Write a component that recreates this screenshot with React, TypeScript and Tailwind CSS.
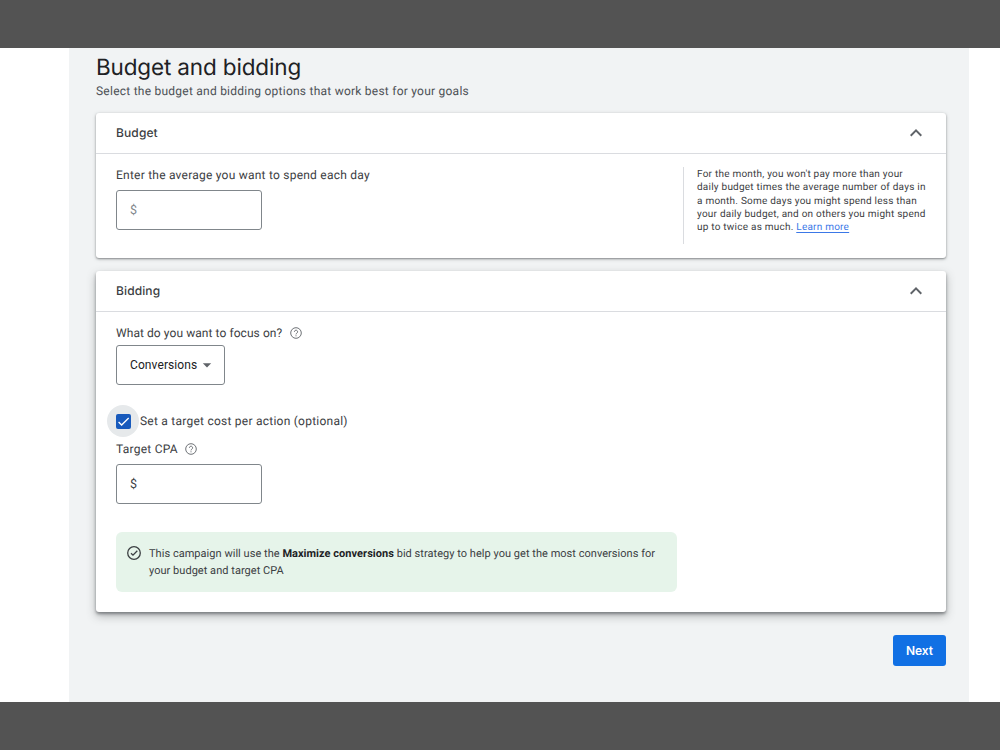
import type { ReactNode } from "react"
import { MdArrowDropDown, MdCheck, MdExpandLess } from "react-icons/md"

interface PanelProps {
    title: string
    className: string
    children: ReactNode
}

function Panel({ title, className, children }: PanelProps) {
    return (
        <section className={`rounded-[3px] bg-white ${className}`}>
            <header className="flex h-[41px] items-center justify-between border-b border-[#dadce0] pl-5 pr-[18px]">
                <h2 className="font-[Inter,sans-serif] text-[12px] font-medium tracking-[0.12px] text-[#3c4043]">{title}</h2>
                <MdExpandLess className="mb-px size-6 text-[#5f6368]" />
            </header>
            {children}
        </section>
    )
}

function MoneyInput({ className }: { className: string }) {
    return (
        <div className={`flex h-10 w-[146px] items-center rounded-[3px] border border-[#80868b] pl-[13px] text-[12.5px] ${className}`}>
            <span className="pt-0.5">$</span>
        </div>
    )
}

function HelpIcon() {
    return (
        <svg viewBox="0 0 12 12" className="size-3 fill-none stroke-[#5f6368] stroke-[0.9]">
            <circle cx="6" cy="6" r="5.3" />
            <path d="M4.4 4.8a1.6 1.6 0 1 1 2.5 1.3c-.6.4-.9.7-.9 1.3M6 8.3v1" />
        </svg>
    )
}

export default function App() {
    return (
        <div className="flex h-[750px] w-[1000px] flex-col overflow-hidden bg-white font-[Roboto,sans-serif] text-[12px] text-[#3c4043] [text-rendering:geometricPrecision]">
            <div className="h-12 shrink-0 bg-[#535353]" />

            <main className="ml-[69px] h-[654px] w-[900px] bg-[#f1f3f4] pl-[27px] pr-[23px]">
                <h1 className="pt-[5px] font-[Inter,sans-serif] text-[22.5px] leading-[30px] tracking-[-0.15px] text-[#202124]">
                    <span>Budget and bidding</span>
                </h1>
                <p className="h-[30px] text-[12px] leading-4 tracking-[0.24px] text-[#4d5156]">
                    <span>Select the budget and bidding options that work best for your goals</span>
                </p>

                <Panel title="Budget" className="h-[145px] shadow-[0_1px_2px_rgba(60,64,67,0.5),0_1px_4px_rgba(60,64,67,0.2)]">
                    <div className="flex justify-between pl-5 pr-[18px]">
                        <div className="pt-[13px]">
                            <label className="block leading-4 tracking-[0.23px]">
                                <span>Enter the average you want to spend each day</span>
                            </label>
                            <MoneyInput className="mt-[7px] text-[#80868b]" />
                        </div>
                        <div className="mt-[13px] h-[77px] w-[245px] whitespace-nowrap border-l border-[#dadce0] pl-[13px] pt-px">
                            <p className="text-[10px] leading-[13.25px] tracking-[0.23px]">
                                For the month, you won't pay more than your
                                <br />
                                daily budget times the average number of days in
                                <br />
                                a month. Some days you might spend less than
                                <br />
                                your daily budget, and on others you might spend
                                <br />
                                up to twice as much.{" "}
                                <a className="text-[#3b78e7] underline underline-offset-2">Learn more</a>
                            </p>
                        </div>
                    </div>
                </Panel>

                <Panel title="Bidding" className="mt-[13px] h-[341px] shadow-[0_2px_3px_rgba(60,64,67,0.5),0_4px_10px_rgba(60,64,67,0.35)]">
                    <div className="pl-5 pt-[13px]">
                        <div className="flex h-4 items-center gap-2 tracking-[0.07px]">
                            <span>What do you want to focus on?</span>
                            <HelpIcon />
                        </div>
                        <button className="mt-1 flex h-10 w-[109px] items-center rounded-[3px] border border-[#80868b] pl-[13px] tracking-[0.1px] text-[#202124]">
                            <span>Conversions</span>
                            <MdArrowDropDown className="size-5 text-[#5f6368]" />
                        </button>

                        <div className="-ml-[9px] mt-5 flex h-8 items-center tracking-[0.24px]">
                            <span className="flex size-8 items-center justify-center rounded-full bg-[#e6e9eb]">
                                <span className="flex size-[15px] items-center justify-center rounded-[2px] bg-[#185abc]">
                                    <MdCheck className="size-[15px] text-white" />
                                </span>
                            </span>
                            <span className="ml-px">Set a target cost per action (optional)</span>
                        </div>

                        <div className="mt-1 flex h-4 items-center gap-[7px] tracking-[0.25px]">
                            <span>Target CPA</span>
                            <HelpIcon />
                        </div>
                        <MoneyInput className="mt-[7px]" />

                        <div className="mt-7 flex h-[60px] w-[561px] rounded-[6px] bg-[#e6f4ea] pl-2.5 pt-[13px]">
                            <svg viewBox="0 0 16 16" className="size-4 shrink-0 fill-none stroke-[#3c4043] stroke-[1.3]">
                                <circle cx="8" cy="8" r="6.3" />
                                <path d="M5 8.2l2 2 4.3-4.4" />
                            </svg>
                            <p className="ml-[7px] whitespace-nowrap text-[11px] leading-[17px] tracking-[0.035px]">
                                This campaign will use the <b className="font-bold text-[#202124]">Maximize conversions</b> bid strategy to help you get the most conversions for
                                <br />
                                your budget and target CPA
                            </p>
                        </div>
                    </div>
                </Panel>

                <div className="mt-[23px] flex justify-end">
                    <button className="h-[31px] w-[53px] rounded-[3px] bg-[#1170e4] font-[Inter,sans-serif] text-[12px] font-semibold text-white">
                        Next
                    </button>
                </div>
            </main>

            <div className="h-12 shrink-0 bg-[#535353]" />
        </div>
    )
}
